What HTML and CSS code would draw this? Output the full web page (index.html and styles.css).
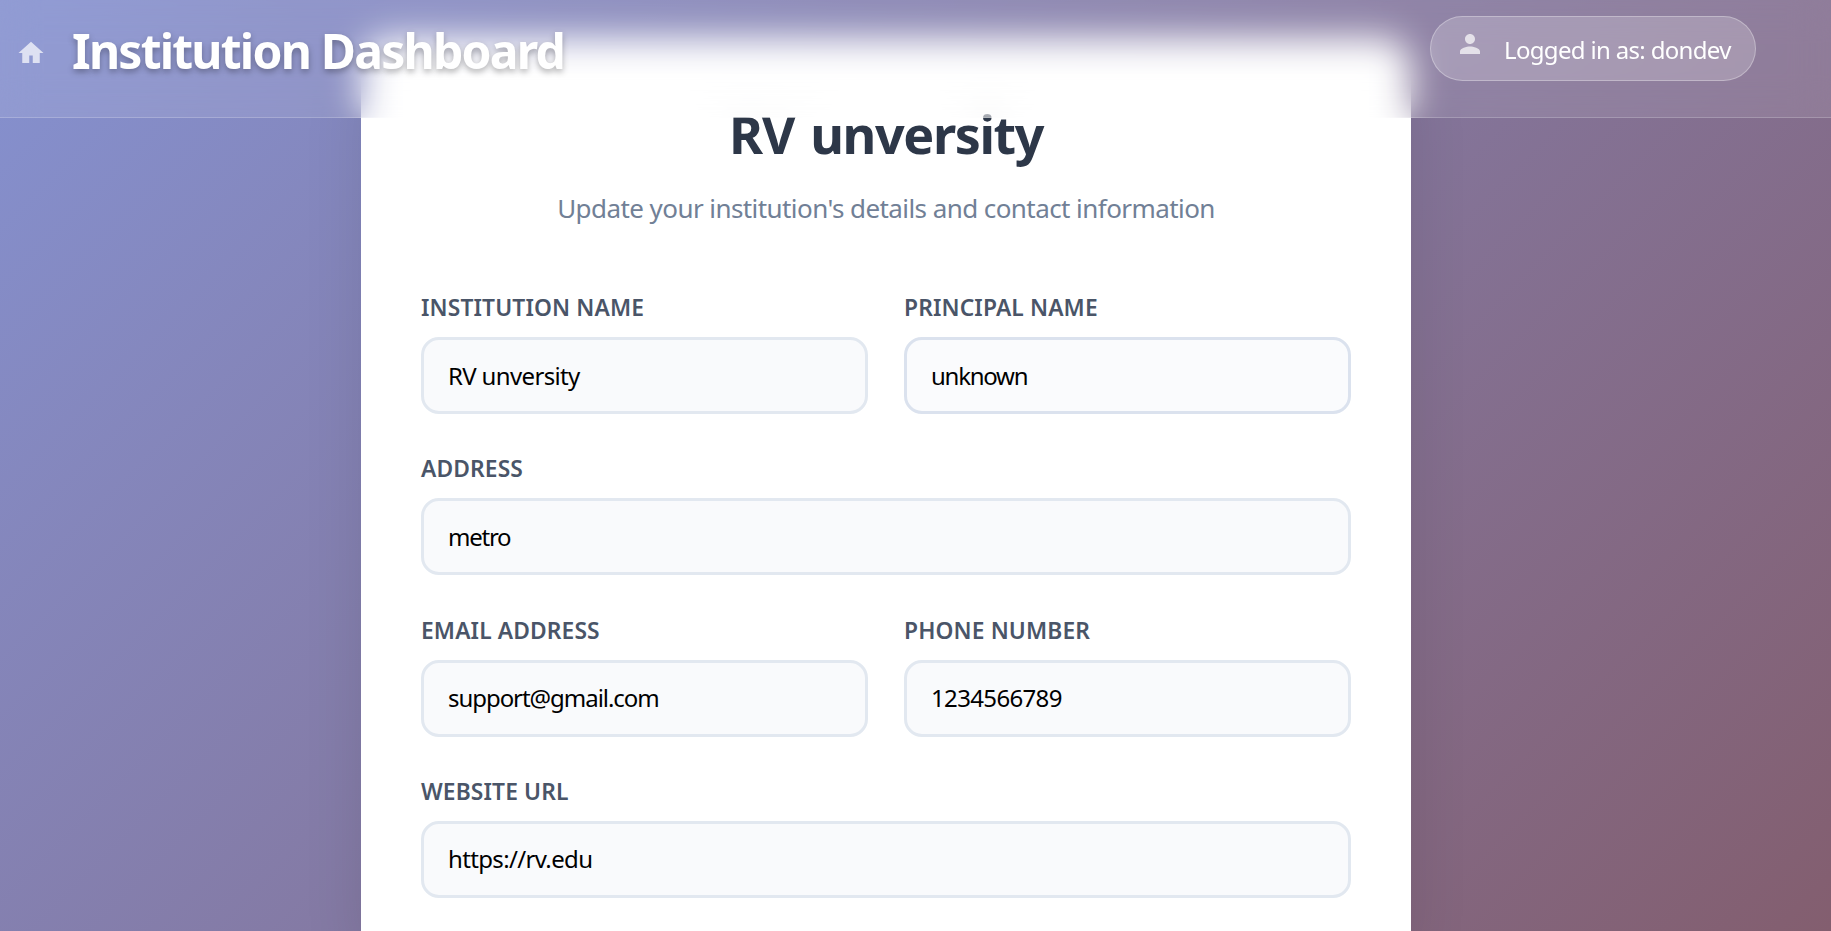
FILE: index.html
```
<!DOCTYPE html>
<html lang="en">
<head>
<meta charset="utf-8">
<title>Institution Dashboard</title>
<link rel="stylesheet" href="styles.css">
</head>
<body>
<header class="topbar">
  <svg class="home" viewBox="0 0 24 24"><path d="M10.6 20v-6h2.8v6H19v-8h3L12 3 2 12h3v8z"/></svg>
  <h1 class="brand">Institution Dashboard</h1>
  <div class="user">
    <svg class="person" viewBox="0 0 24 24"><path d="M12 12c2.21 0 4-1.79 4-4s-1.79-4-4-4-4 1.79-4 4 1.79 4 4 4zm0 2c-2.67 0-8 1.34-8 4v2h16v-2c0-2.66-5.33-4-8-4z"/></svg>
    <span class="user-name">Logged in as: dondev</span>
  </div>
</header>
<main class="page">
  <section class="card">
    <h2 class="title">RV unversity</h2>
    <p class="subtitle">Update your institution's details and contact information</p>
    <form class="form">
      <div class="field"><label class="label" for="name">INSTITUTION NAME</label><input class="input" id="name" value="RV unversity"></div>
      <div class="field"><label class="label" for="principal">PRINCIPAL NAME</label><input class="input active tight" id="principal" value="unknown"></div>
      <div class="field wide"><label class="label" for="address">ADDRESS</label><input class="input tight" id="address" value="metro"></div>
      <div class="field"><label class="label" for="email">EMAIL ADDRESS</label><input class="input snug" id="email" value="support@gmail.com"></div>
      <div class="field"><label class="label" for="phone">PHONE NUMBER</label><input class="input" id="phone" value="1234566789"></div>
      <div class="field wide"><label class="label" for="url">WEBSITE URL</label><input class="input" id="url" value="https://rv.edu"></div>
    </form>
  </section>
</main>
</body>
</html>
```
FILE: styles.css
```
* { box-sizing: border-box; }
body {
  margin: 0;
  height: 931px;
  font-family: "Noto Sans", "Open Sans", sans-serif;
  background: linear-gradient(135deg, #8591d0 0%, #835e6f 100%);
}
.topbar {
  position: fixed;
  top: 0;
  left: 0;
  z-index: 2;
  width: 100%;
  height: 118px;
  display: flex;
  align-items: flex-start;
  padding: 15px 75px 0 16px;
  background: rgba(255, 255, 255, .1);
  border-bottom: 1px solid rgba(255, 255, 255, .2);
  backdrop-filter: blur(18px);
}
.home { width: 30px; height: 30px; margin-top: 23px; fill: rgba(255, 255, 255, .7); }
.brand {
  margin: 4px auto 0 26px;
  font-size: 48px;
  line-height: 64px;
  font-weight: 700;
  letter-spacing: -1.77px;
  color: #fff;
  text-shadow: 0 3px 6px rgba(0, 0, 0, .3);
}
.user {
  display: flex;
  width: 326px;
  height: 65px;
  margin-top: 1px;
  padding: 12px 24px 0 24px;
  border: 1px solid rgba(255, 255, 255, .3);
  border-radius: 38px;
  background: rgba(255, 255, 255, .2);
}
.person { flex: none; width: 30px; height: 30px; fill: rgba(255, 255, 255, .7); }
.user-name { margin-left: 19px; font-size: 24px; line-height: 42px; letter-spacing: -.67px; color: #fff; white-space: nowrap; }
.page { height: 931px; padding: 38px 59px 0 0; overflow: hidden; }
.card {
  width: 1050px;
  height: 893px;
  margin: 0 auto;
  padding: 60px 60px 0;
  border-radius: 30px 30px 0 0;
  background: #fff;
  box-shadow: 0 30px 60px rgba(0, 0, 0, .1);
}
.title { margin: 0; text-align: center; font-size: 52px; line-height: 72px; font-weight: 700; letter-spacing: -1.4px; word-spacing: 4px; color: #2d3748; }
.subtitle { margin: 19px 0 0; text-align: center; font-size: 26px; line-height: 38px; letter-spacing: -.57px; color: #718096; }
.form { display: grid; grid-template-columns: 1fr 1fr; gap: 37.3px 36px; margin-top: 63px; }
.field { display: flex; flex-direction: column; }
.wide { grid-column: 1 / -1; }
.label { margin-bottom: 12px; font-size: 22.8px; line-height: 35px; font-weight: 600; letter-spacing: .12px; color: #4a5568; }
.input {
  width: 100%;
  height: 77px;
  padding: 0 24px 1px;
  border: 3px solid #e2e8f0;
  border-radius: 18px;
  background: #f9fafc;
  font-family: "Noto Sans", "Open Sans", sans-serif;
  font-size: 24px;
  letter-spacing: -.65px;
  color: #000;
  outline: none;
}
.snug { letter-spacing: -1.05px; }
.tight { letter-spacing: -1.25px; }
.active { border-color: #dbe2ee; background: #fafbfd; }
```
